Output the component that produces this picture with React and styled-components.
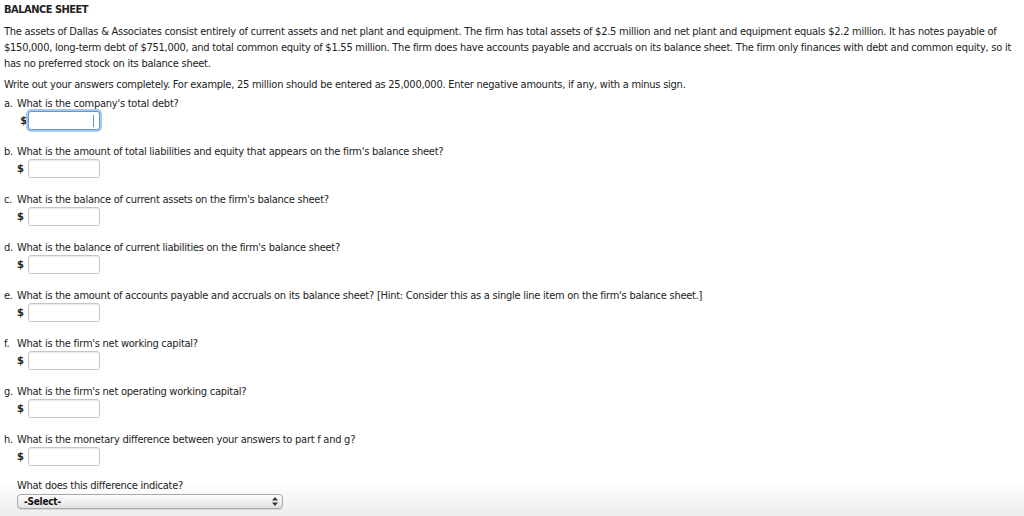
import React from 'react';
import styled, { createGlobalStyle } from 'styled-components';

const GlobalStyle = createGlobalStyle`
  html, body {
    margin: 0;
    padding: 0;
  }
  body {
    width: 1024px;
    height: 516px;
    overflow: hidden;
    background: linear-gradient(to bottom, #ffffff 0px, #ffffff 482px, #ededed 516px);
    font-family: "DejaVu Sans Condensed", "DejaVu Sans", Verdana, sans-serif;
    color: #222;
  }
`;

const Page = styled.div`
  padding: 2px 6px 0 4px;
  font-size: 11px;
  letter-spacing: -0.25px;
`;

const Title = styled.div`
  font-weight: bold;
  line-height: 16px;
  margin-bottom: 6px;
  letter-spacing: -0.5px;
`;

const Para = styled.p`
  margin: 0 0 ${(p) => p.gap || 5}px 0;
  line-height: 16px;
`;

const Question = styled.div`
  height: 48px;
`;

const QText = styled.div`
  display: flex;
  line-height: 14px;
`;

const Letter = styled.span`
  width: 13px;
  flex: none;
`;

const AnswerRow = styled.div`
  display: flex;
  align-items: center;
  padding-left: 13px;
  height: 19px;
  font-weight: bold;
`;

const Dollar = styled.span`
  width: 11px;
  text-align: ${(p) => (p.tight ? 'right' : 'left')};
  padding-right: ${(p) => (p.tight ? 1 : 0)}px;
  box-sizing: border-box;
`;

const Input = styled.input`
  box-sizing: border-box;
  width: 72px;
  height: 19px;
  padding: 0 3px;
  border: 1px solid ${(p) => (p.focused ? '#5d97d6' : '#c6c6c6')};
  border-radius: 3px;
  background: #fff;
  box-shadow: ${(p) =>
    p.focused
      ? '0 0 0 2px #a9c8ee'
      : 'inset 0 1px 1px rgba(0,0,0,0.08)'};
  outline: none;
  font: 11px "DejaVu Sans", sans-serif;
`;

const Caret = styled.span`
  display: inline-block;
  width: 1px;
  height: 12px;
  background: #5d97d6;
  margin-left: -7px;
`;

const Indented = styled.div`
  padding-left: 13px;
  margin-top: -2px;
  line-height: 14px;
`;

const Select = styled.div`
  box-sizing: border-box;
  margin-top: 1px;
  width: 266px;
  height: 15px;
  display: flex;
  align-items: center;
  justify-content: space-between;
  padding: 0 4px 0 6px;
  border: 1px solid #a8a8a8;
  border-radius: 4px;
  background: linear-gradient(to bottom, #fdfdfd, #e2e2e2);
  box-shadow: 0 1px 1px rgba(0,0,0,0.1);
  font-size: 10px;
  font-weight: bold;
  color: #111;
`;

const Arrows = styled.svg`
  width: 6px;
  height: 9px;
`;

const questions = [
  ['a.', "What is the company's total debt?"],
  ['b.', "What is the amount of total liabilities and equity that appears on the firm's balance sheet?"],
  ['c.', "What is the balance of current assets on the firm's balance sheet?"],
  ['d.', "What is the balance of current liabilities on the firm's balance sheet?"],
  ['e.', "What is the amount of accounts payable and accruals on its balance sheet? [Hint: Consider this as a single line item on the firm's balance sheet.]"],
  ['f.', "What is the firm's net working capital?"],
  ['g.', "What is the firm's net operating working capital?"],
  ['h.', 'What is the monetary difference between your answers to part f and g?'],
];

export default function App() {
  return (
    <>
      <GlobalStyle />
      <Page>
        <Title>BALANCE SHEET</Title>
        <Para>
          The assets of Dallas &amp; Associates consist entirely of current assets and net plant and equipment. The firm has total assets of $2.5 million and net plant and equipment equals $2.2 million. It has notes payable of $150,000, long-term debt of $751,000, and total common equity of $1.55 million. The firm does have accounts payable and accruals on its balance sheet. The firm only finances with debt and common equity, so it has no preferred stock on its balance sheet.
        </Para>
        <Para gap={4}>
          Write out your answers completely. For example, 25 million should be entered as 25,000,000. Enter negative amounts, if any, with a minus sign.
        </Para>
        {questions.map(([l, q], i) => (
          <Question key={l}>
            <QText>
              <Letter>{l}</Letter>
              <span>{q}</span>
            </QText>
            <AnswerRow>
              <Dollar tight={i === 0}>$</Dollar>
              <Input focused={i === 0} readOnly />
              {i === 0 && <Caret />}
            </AnswerRow>
          </Question>
        ))}
        <Indented>
          <div>What does this difference indicate?</div>
          <Select>
            <span>-Select-</span>
            <Arrows viewBox="0 0 6 9">
              <path d="M3 0 L6 3.5 L0 3.5 Z M3 9 L6 5.5 L0 5.5 Z" fill="#333" />
            </Arrows>
          </Select>
        </Indented>
      </Page>
    </>
  );
}
